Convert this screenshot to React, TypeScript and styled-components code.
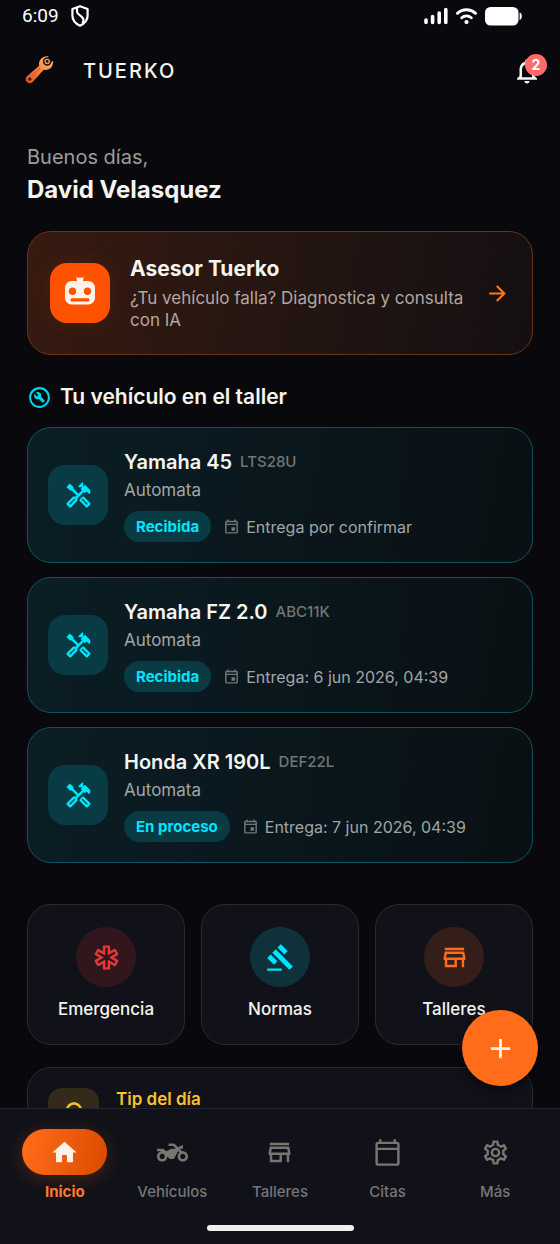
import React from "react";
import styled, { createGlobalStyle } from "styled-components";
import {
  MdAdd,
  MdArrowForward,
  MdGavel,
  MdHome,
  MdNotificationsNone,
  MdOutlineBuildCircle,
  MdOutlineCalendarToday,
  MdOutlineEmergency,
  MdOutlineEvent,
  MdOutlineHandyman,
  MdOutlineLightbulb,
  MdOutlineSettings,
  MdOutlineStore,
  MdTwoWheeler,
} from "react-icons/md";

const GlobalStyle = createGlobalStyle`
  * { box-sizing: border-box; }
  body {
    margin: 0;
    background: #09090d;
    color: #f5f5f0;
    font-family: Inter, Roboto, "Liberation Sans", sans-serif;
  }
  button { font: inherit; color: inherit; border: 0; padding: 0; background: none; text-align: left; }
  a { color: inherit; text-decoration: none; }
  h1, h2, h3, p, ul { margin: 0; padding: 0; }
  svg { display: block; flex: none; }
`;

const Screen = styled.div`
  position: relative;
  height: 100vh;
  display: flex;
  flex-direction: column;
  overflow: hidden;
`;

const StatusBar = styled.div`
  flex: none;
  display: flex;
  align-items: center;
  justify-content: space-between;
  height: 32px;
  padding: 0 38px 0 22px;
  color: #ffffff;
  font: 400 19px/24px Roboto, sans-serif;
`;

const StatusGroup = styled.div<{ $gap: number }>`
  display: flex;
  align-items: center;
  gap: ${(p) => p.$gap}px;
`;

const Header = styled.header`
  flex: none;
  display: flex;
  align-items: center;
  height: 78px;
  padding: 0 18px 0 24px;
`;

const Brand = styled.h1`
  flex: 1;
  margin-left: 28px;
  font-size: 20px;
  line-height: 28px;
  font-weight: 500;
  letter-spacing: 2px;
`;

const BellButton = styled.button`
  position: relative;
  width: 30px;
  height: 30px;
`;

const Badge = styled.span`
  position: absolute;
  top: -2px;
  right: -5px;
  width: 22px;
  height: 22px;
  border-radius: 50%;
  background: #ff6b6b;
  color: #ffffff;
  font-size: 14px;
  line-height: 22px;
  font-weight: 700;
  text-align: center;
`;

const Content = styled.main`
  flex: 1;
  min-height: 0;
  overflow-y: auto;
  scrollbar-width: none;
  padding: 34px 27px 0;
`;

const Greeting = styled.p`
  color: #9d9d9c;
  font-size: 20px;
  line-height: 26px;
`;

const UserName = styled.h2`
  margin-top: 3px;
  font-size: 24px;
  line-height: 34px;
  font-weight: 700;
`;

const AdvisorCard = styled.button`
  display: flex;
  align-items: center;
  width: 100%;
  margin-top: 24px;
  padding: 22px;
  min-height: 124px;
  border: 1px solid #6b3217;
  border-radius: 24px;
  background: linear-gradient(100deg, #371a10 0%, #291711 38%, #1d1312 72%, #150f12 100%);
`;

const AdvisorIcon = styled.span`
  display: grid;
  place-items: center;
  flex: none;
  width: 60px;
  height: 60px;
  border-radius: 17px;
  background: #ff5200;
  box-shadow: 0 0 24px rgba(255, 82, 0, 0.1);
`;

const AdvisorText = styled.span`
  flex: 1;
  min-width: 0;
  display: flex;
  flex-direction: column;
  margin: 0 20px;
`;

const AdvisorTitle = styled.strong`
  font-size: 21px;
  line-height: 28px;
  font-weight: 700;
`;

const AdvisorDetail = styled.span`
  margin-top: 4px;
  color: #b3a7a2;
  font-size: 17px;
  line-height: 22px;
`;

const SectionTitle = styled.h2`
  display: flex;
  align-items: center;
  gap: 8px;
  margin: 28px 0 16px;
  font-size: 21px;
  line-height: 28px;
  font-weight: 600;
`;

const VehicleList = styled.ul`
  display: flex;
  flex-direction: column;
  gap: 14px;
  list-style: none;
`;

const VehicleCard = styled.li`
  display: flex;
  align-items: center;
  gap: 16px;
  padding: 20px;
  min-height: 136px;
  border: 1px solid #11545f;
  border-radius: 24px;
  background: linear-gradient(100deg, #0a1e24 0%, #0a181e 45%, #091013 100%);
`;

const VehicleIcon = styled.span`
  display: grid;
  place-items: center;
  flex: none;
  width: 60px;
  height: 60px;
  border-radius: 17px;
  background: #083b43;
  color: #00e5ff;
`;

const VehicleInfo = styled.div`
  flex: 1;
  min-width: 0;
`;

const VehicleHeading = styled.div`
  display: flex;
  align-items: center;
  gap: 8px;
`;

const VehicleName = styled.h3`
  font-size: 20px;
  line-height: 28px;
  font-weight: 600;
`;

const Plate = styled.span`
  color: #717778;
  font-size: 15px;
  line-height: 24px;
  font-weight: 500;
`;

const Shop = styled.p`
  margin-top: 3px;
  color: #a0a6a7;
  font-size: 17px;
  line-height: 22px;
`;

const VehicleMeta = styled.div`
  display: flex;
  align-items: center;
  margin-top: 10px;
`;

const StatusChip = styled.span`
  padding: 0 12px;
  border-radius: 16px;
  background: #083b43;
  color: #00e5ff;
  font-size: 15px;
  line-height: 31px;
  font-weight: 700;
`;

const Delivery = styled.span`
  display: flex;
  align-items: center;
  gap: 6px;
  margin-left: 12px;
  color: #a0a6a7;
  font-size: 16px;
  line-height: 22px;

  svg { color: #717778; }
`;

const Shortcuts = styled.div`
  display: grid;
  grid-template-columns: repeat(3, 1fr);
  gap: 16px;
  margin-top: 41px;
`;

const Shortcut = styled.button`
  display: flex;
  flex-direction: column;
  align-items: center;
  gap: 11px;
  padding: 22px 8px;
  min-height: 141px;
  border: 1px solid #2a2b2f;
  border-radius: 24px;
  background: #111219;
  font-size: 17px;
  line-height: 22px;
  font-weight: 500;
`;

const ShortcutIcon = styled.span<{ $fg: string; $bg: string }>`
  display: grid;
  place-items: center;
  width: 60px;
  height: 60px;
  border-radius: 50%;
  color: ${(p) => p.$fg};
  background: ${(p) => p.$bg};
`;

const TipCard = styled.section`
  display: flex;
  gap: 17px;
  margin-top: 22px;
  padding: 20px;
  min-height: 120px;
  border: 1px solid #2a2b2f;
  border-radius: 24px;
  background: #111219;
`;

const TipIcon = styled.span`
  display: grid;
  place-items: center;
  flex: none;
  width: 51px;
  height: 51px;
  border-radius: 14px;
  background: #332a19;
  color: #fbc02d;
`;

const TipTitle = styled.h3`
  color: #fbc02d;
  font-size: 17px;
  line-height: 22px;
  font-weight: 600;
`;

const Fab = styled.button`
  position: absolute;
  right: 22px;
  bottom: 158px;
  display: grid;
  place-items: center;
  width: 76px;
  height: 76px;
  border-radius: 50%;
  background: #ff6d1b;
  color: #fff3e6;
  box-shadow: 0 6px 12px rgba(0, 0, 0, 0.4);
`;

const BottomBar = styled.footer`
  flex: none;
  display: flex;
  flex-direction: column;
  align-items: center;
  padding: 20px 11px 13px;
  border-top: 1px solid #25262b;
  background: #111219;
`;

const Tabs = styled.nav`
  display: grid;
  grid-template-columns: repeat(5, 1fr);
  width: 100%;
`;

const Tab = styled.a<{ $active?: boolean }>`
  display: flex;
  flex-direction: column;
  align-items: center;
  gap: 6px;
  color: ${(p) => (p.$active ? "#ff7a2e" : "#75757a")};
  font-size: 15px;
  line-height: 22px;
  font-weight: ${(p) => (p.$active ? 700 : 500)};
`;

const TabIcon = styled.span<{ $active?: boolean }>`
  display: grid;
  place-items: center;
  width: 85px;
  height: 46px;
  border-radius: 23px;
  color: ${(p) => (p.$active ? "#fff3ea" : "#777772")};
  background: ${(p) => (p.$active ? "linear-gradient(100deg, #ff6d1b, #dc4a00)" : "none")};
  box-shadow: ${(p) => (p.$active ? "0 4px 18px rgba(255, 100, 20, 0.22)" : "none")};
`;

const HomeIndicator = styled.div`
  width: 147px;
  height: 6px;
  margin-top: 22px;
  border-radius: 3px;
  background: #f0f0ee;
`;

const ShieldIcon = () => (
  <svg width="18" height="22" viewBox="0 0 18 22" fill="none" stroke="#fff" strokeWidth="2.2">
    <path d="M9 1.3 16.6 4v6.5c0 4.6-3 8-7.6 10.2C4.4 18.5 1.400 15.100 1.400 10.500V4Z" strokeLinejoin="round" />
    <path d="M6 2.600v4.200c0 3 6.500 4.500 6.500 8.200 0 1.400-.5 2.400-1.200 3.300" />
  </svg>
);

const SignalIcon = () => (
  <svg width="24" height="18" viewBox="0 0 24 18" stroke="#fff" strokeWidth="3.6" strokeLinecap="round">
    <path d="M2 13v2.500M8.600 9.500v6M15.200 6v9.500M21.800 2.500v13" />
  </svg>
);

const WifiIcon = () => (
  <svg width="23" height="18" viewBox="0 0 24 18" fill="none" stroke="#fff" strokeWidth="3" strokeLinecap="round">
    <path d="M2.500 6.200c5.500-5 13.500-5 19 0M7 10.800c3-2.600 7-2.600 10 0" />
    <circle cx="12" cy="15.300" r="2.200" fill="#fff" stroke="none" />
  </svg>
);

const BatteryIcon = () => (
  <svg width="37" height="19" viewBox="0 0 37 19" fill="#fff">
    <rect width="33.500" height="18.600" rx="5.500" />
    <path d="M34.600 5.500c1.600.6 2.200 2 2.200 3.800s-.6 3.200-2.200 3.800Z" />
  </svg>
);

const WrenchLogo = () => (
  <svg width="31" height="30" viewBox="0 1 31 30">
    <defs>
      <linearGradient id="wrench" x1="1" y1="0" x2="0" y2="1">
        <stop offset="0" stopColor="#ffbe80" />
        <stop offset=".45" stopColor="#fb8c3f" />
        <stop offset="1" stopColor="#cf4f1a" />
      </linearGradient>
    </defs>
    <path
      d="M15.200 10.800c-.9-3.800 1-7.300 4.500-8.900 1.700-.8 3.400-.9 4.900-.5l-1.700 2.100 3.500 3.700 2.600-1.200c.5 3.800-1.500 7.500-5 8.600-1.500.5-3 .5-4.300.1L9.400 26.300c-1.500 2.100-4.400 2.500-6.300 1-1.900-1.600-2-4.400-.2-6.100Z"
      fill="url(#wrench)"
    />
    <path d="m8.500 20.500 7.200-7.500" stroke="#d9642a" strokeWidth="1.400" strokeLinecap="round" />
    <circle cx="23.200" cy="6.400" r="3.500" fill="#fb9a50" stroke="#1d1010" strokeWidth="1.500" />
    <circle cx="23.200" cy="6.400" r="1.300" fill="#1d1010" />
    <circle cx="5.800" cy="24" r="1.600" fill="#3a1510" />
  </svg>
);

const RobotIcon = () => (
  <svg width="32" height="34" viewBox="0 0 32 34" fill="#fff3ea">
    <path
      fillRule="evenodd"
      d="M12.300.8 15 2.200l1-1.400 1 1.400L19.700.8 19 5h5.500A6.500 6.500 0 0 1 31 11.500v10.500a6.500 6.500 0 0 1-6.500 6.500h-17A6.500 6.500 0 0 1 1 22V11.500A6.500 6.500 0 0 1 7.500 5H13ZM8.500 11.600a3.700 3.700 0 1 0 0 7.400 3.700 3.700 0 0 0 0-7.400Zm15 0a3.700 3.700 0 1 0 0 7.400 3.700 3.700 0 0 0 0-7.400ZM8 22.300a1.600 1.600 0 0 0 0 3.200h16a1.600 1.600 0 0 0 0-3.200Z"
    />
  </svg>
);

const vehicles = [
  { name: "Yamaha 45", plate: "LTS28U", status: "Recibida", delivery: "Entrega por confirmar" },
  { name: "Yamaha FZ 2.0", plate: "ABC11K", status: "Recibida", delivery: "Entrega: 6 jun 2026, 04:39" },
  { name: "Honda XR 190L", plate: "DEF22L", status: "En proceso", delivery: "Entrega: 7 jun 2026, 04:39" },
];

const shortcuts = [
  { label: "Emergencia", icon: <MdOutlineEmergency size={29} />, fg: "#e53935", bg: "#31171d" },
  { label: "Normas", icon: <MdGavel size={29} />, fg: "#00e5ff", bg: "#0f3139" },
  { label: "Talleres", icon: <MdOutlineStore size={29} />, fg: "#ff6d1b", bg: "#351e19" },
];

const tabs = [
  { label: "Inicio", icon: <MdHome size={29} />, active: true },
  { label: "Vehículos", icon: <MdTwoWheeler size={31} /> },
  { label: "Talleres", icon: <MdOutlineStore size={29} /> },
  { label: "Citas", icon: <MdOutlineCalendarToday size={29} /> },
  { label: "Más", icon: <MdOutlineSettings size={29} /> },
];

export default function App() {
  return (
    <Screen>
      <GlobalStyle />
      <StatusBar>
        <StatusGroup $gap={12}>
          <span>6:09</span>
          <ShieldIcon />
        </StatusGroup>
        <StatusGroup $gap={7}>
          <SignalIcon />
          <WifiIcon />
          <BatteryIcon />
        </StatusGroup>
      </StatusBar>

      <Header>
        <WrenchLogo />
        <Brand>TUERKO</Brand>
        <BellButton aria-label="Notificaciones">
          <MdNotificationsNone size={30} />
          <Badge>2</Badge>
        </BellButton>
      </Header>

      <Content>
        <Greeting>Buenos días,</Greeting>
        <UserName>David Velasquez</UserName>

        <AdvisorCard>
          <AdvisorIcon>
            <RobotIcon />
          </AdvisorIcon>
          <AdvisorText>
            <AdvisorTitle>Asesor Tuerko</AdvisorTitle>
            <AdvisorDetail>¿Tu vehículo falla? Diagnostica y consulta con IA</AdvisorDetail>
          </AdvisorText>
          <MdArrowForward size={25} color="#ff7a1f" />
        </AdvisorCard>

        <SectionTitle>
          <MdOutlineBuildCircle size={25} color="#00d5ee" />
          Tu vehículo en el taller
        </SectionTitle>

        <VehicleList>
          {vehicles.map((v) => (
            <VehicleCard key={v.plate}>
              <VehicleIcon>
                <MdOutlineHandyman size={29} />
              </VehicleIcon>
              <VehicleInfo>
                <VehicleHeading>
                  <VehicleName>{v.name}</VehicleName>
                  <Plate>{v.plate}</Plate>
                </VehicleHeading>
                <Shop>Automata</Shop>
                <VehicleMeta>
                  <StatusChip>{v.status}</StatusChip>
                  <Delivery>
                    <MdOutlineEvent size={17} />
                    {v.delivery}
                  </Delivery>
                </VehicleMeta>
              </VehicleInfo>
            </VehicleCard>
          ))}
        </VehicleList>

        <Shortcuts>
          {shortcuts.map((s) => (
            <Shortcut key={s.label}>
              <ShortcutIcon $fg={s.fg} $bg={s.bg}>
                {s.icon}
              </ShortcutIcon>
              {s.label}
            </Shortcut>
          ))}
        </Shortcuts>

        <TipCard>
          <TipIcon>
            <MdOutlineLightbulb size={28} />
          </TipIcon>
          <TipTitle>Tip del día</TipTitle>
        </TipCard>
      </Content>

      <BottomBar>
        <Tabs>
          {tabs.map((t) => (
            <Tab key={t.label} href="#" $active={t.active}>
              <TabIcon $active={t.active}>{t.icon}</TabIcon>
              {t.label}
            </Tab>
          ))}
        </Tabs>
        <HomeIndicator />
      </BottomBar>

      <Fab aria-label="Agregar">
        <MdAdd size={33} />
      </Fab>
    </Screen>
  );
}
